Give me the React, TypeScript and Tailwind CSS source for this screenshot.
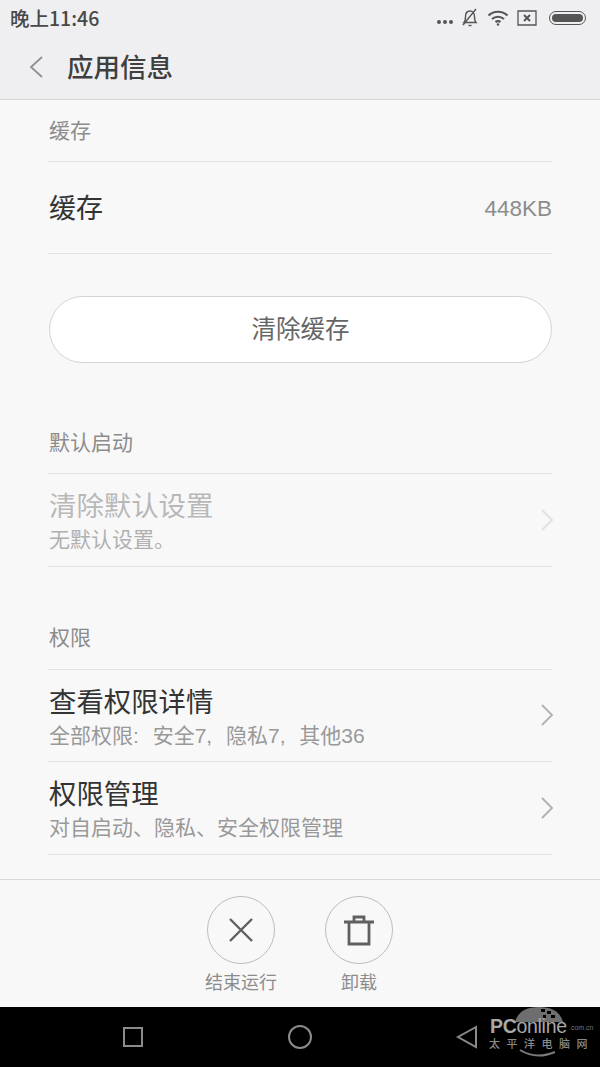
function SectionTitle({ children, className }: { children: string; className: string }) {
  return <div className={`text-[21px] leading-[28px] text-[#8c8c8c] ${className}`}>{children}</div>
}

function Chevron({ light }: { light?: boolean }) {
  return (
    <svg width="14" height="26" viewBox="0 0 14 26" fill="none" className={`-mr-[2px] ${light ? 'text-[#e0e0e0]' : 'text-[#b0b0b0]'}`}>
      <path d="M2 3l10 10L2 23" stroke="currentColor" strokeWidth="1.800" />
    </svg>
  )
}

function LinkRow({ title, sub, disabled }: { title: string; sub: string; disabled?: boolean }) {
  return (
    <div className="h-[92.5px] border-b border-[#e2e2e2] flex items-center justify-between">
      <div className="pt-[4px] pl-px">
        <div className={`text-[27.400px] leading-[36px] ${disabled ? 'text-[#b8b8b8]' : 'text-[#333333]'}`}>{title}</div>
        <div className={`text-[21px] leading-[28px] mt-px [word-spacing:8px] ${disabled ? 'text-[#b0b0b0]' : 'text-[#999999]'}`}>{sub}</div>
      </div>
      <Chevron light={disabled} />
    </div>
  )
}

export default function App() {
  return (
    <div className="w-[600px] h-[1067px] flex flex-col bg-[#f8f8f8] overflow-hidden font-['Liberation_Sans','Noto_Sans_CJK_SC',sans-serif]">
      {/* header */}
      <div className="h-[100px] shrink-0 bg-[#efeff1] border-b border-[#d6d6d6]">
        <div className="h-[35px] flex items-center justify-between pl-[10px] pr-[14px]">
          <span className="text-[19.500px] font-medium text-[#484848] font-['Noto_Sans_CJK_SC',sans-serif]">晚上11:46</span>
          <div className="flex items-center text-[#555555]">
            <svg width="18" height="6" viewBox="0 0 18 6" fill="currentColor" className="mt-[9px]">
              <circle cx="3" cy="3" r="2" />
              <circle cx="9" cy="3" r="2" />
              <circle cx="15" cy="3" r="2" />
            </svg>
            <svg width="18" height="20" viewBox="0 0 18 20" fill="none" stroke="currentColor" strokeWidth="1.400" className="ml-[7px]">
              <path d="M3 14.500c1.500-1.500 1.500-3 1.500-6C4.500 5 6.500 3 9 3s4.500 2 4.500 5.500c0 3 0 4.500 1.500 6z" />
              <path d="M7.500 17.500h3" />
              <path d="M2 17L15 1" />
            </svg>
            <svg width="22" height="16" viewBox="0 0 22 16" fill="none" stroke="currentColor" strokeWidth="2.200" className="ml-[8px]">
              <path d="M1.500 5.500c5.500-5 13.500-5 19 0" />
              <path d="M5 9c3.500-3 8.500-3 12 0" />
              <path d="M8.500 12c1.500-1 3.500-1 5 0" />
              <circle cx="11" cy="14.500" r="1.200" fill="currentColor" stroke="none" />
            </svg>
            <svg width="20" height="16" viewBox="0 0 20 16" fill="none" stroke="currentColor" className="ml-[8px]">
              <path d="M1 1h18v14H1z" strokeWidth="1.300" />
              <path d="M7 5l6 6M13 5l-6 6" strokeWidth="2" />
            </svg>
            <div className="ml-[12px] w-[37px] h-[14px] rounded-full border border-[#555555] p-[2px]">
              <div className="w-full h-full rounded-full bg-[#555555]" />
            </div>
          </div>
        </div>
        <div className="h-[64px] flex items-center pl-[28px]">
          <svg width="16" height="24" viewBox="0 0 16 24" fill="none" stroke="#909090" strokeWidth="1.800">
            <path d="M14 2L3 12l11 10" />
          </svg>
          <span className="ml-[23px] pt-[4px] text-[26.500px] font-medium text-[#3f3f3f]">应用信息</span>
        </div>
      </div>

      {/* scroll content */}
      <div className="flex-1 px-[48px] overflow-hidden">
        <SectionTitle className="pl-px pt-[17px] h-[62px] border-b border-[#e2e2e2]">缓存</SectionTitle>
        <div className="h-[92px] pl-px pt-[4px] border-b border-[#e2e2e2] flex items-center justify-between">
          <span className="text-[27px] text-[#333333]">缓存</span>
          <span className="pb-[2px] text-[22.500px] text-[#8c8c8c]">448KB</span>
        </div>
        <div className="mt-[42px] ml-px h-[67px] pt-[2px] rounded-full border border-[#d4d4d4] bg-white flex items-center justify-center text-[24.500px] text-[#666666]">
          清除缓存
        </div>
        <SectionTitle className="pl-px pt-px mt-[65px] h-[46px] border-b border-[#e2e2e2]">默认启动</SectionTitle>
        <LinkRow title="清除默认设置" sub="无默认设置。" disabled />
        <SectionTitle className="pl-px mt-[57px] h-[46px] border-b border-[#e2e2e2]">权限</SectionTitle>
        <LinkRow title="查看权限详情" sub="全部权限: 安全7, 隐私7, 其他36" />
        <LinkRow title="权限管理" sub="对自启动、隐私、安全权限管理" />
      </div>

      {/* action bar */}
      <div className="h-[128px] shrink-0 border-t border-[#d9d9d9] bg-[#f8f8f8] flex justify-center gap-[46px] pt-[16px]">
        <div className="w-[72px] flex flex-col items-center">
          <div className="w-[68px] h-[68px] rounded-full border border-[#bdbdbd] flex items-center justify-center">
            <svg width="26" height="26" viewBox="0 0 26 26" fill="none" stroke="#606060" strokeWidth="2.400">
              <path d="M2 2l22 22M24 2L2 24" />
            </svg>
          </div>
          <span className="mt-[6px] text-[18px] text-[#8c8c8c] whitespace-nowrap">结束运行</span>
        </div>
        <div className="w-[72px] flex flex-col items-center">
          <div className="w-[68px] h-[68px] rounded-full border border-[#bdbdbd] flex items-center justify-center">
            <svg width="32" height="32" viewBox="0 0 32 32" fill="none" stroke="#606060" strokeWidth="2.800">
              <path d="M1 8h30M11 8V3h10v5M6 8v22h20V8" />
            </svg>
          </div>
          <span className="mt-[6px] text-[18px] text-[#8c8c8c]">卸载</span>
        </div>
      </div>

      {/* nav bar */}
      <div className="h-[60px] shrink-0 bg-black relative flex items-center">
        <div className="w-[20px] h-[20px] ml-[123px] border-2 border-[#8a8a8a]" />
        <div className="w-[24px] h-[24px] ml-[145px] rounded-full border-2 border-[#8a8a8a]" />
        <svg width="22" height="24" viewBox="0 0 22 24" fill="none" stroke="#8a8a8a" strokeWidth="2" className="ml-[144px]">
          <path d="M20 2L2 12l18 10z" />
        </svg>
        {/* watermark */}
        <div className="absolute left-[489px] top-0 w-[111px] h-[60px]">
          <svg width="60" height="56" viewBox="0 0 60 56" className="absolute left-[16px] top-0">
            <path d="M10 15Q14 0 34 0Q54 0 58 15z" fill="#6e6e6e" />
            <path d="M36 2h4v3h-4zM42 4h4v3h-4zM46 8h4v3h-4zM38 8h3v3h-3z" fill="#000000" />
            <path d="M15 43Q31 53 50 45" fill="none" stroke="#7a7a7a" strokeWidth="2" />
          </svg>
          <div className="absolute left-[1px] top-[11px] text-[19.500px] leading-[16px] tracking-[-0.3px] text-[#a8a8a8] whitespace-nowrap">
            <span className="font-bold">PC</span>online
          </div>
          <div className="absolute left-[80px] top-[17px] text-[7px] leading-[8px] text-[#777777]">.com.cn</div>
          <div className="absolute left-0 top-[31px] text-[11px] leading-[12px] font-medium tracking-[6.500px] text-[#8a8a8a] whitespace-nowrap">太平洋电脑网</div>
        </div>
      </div>
    </div>
  )
}
